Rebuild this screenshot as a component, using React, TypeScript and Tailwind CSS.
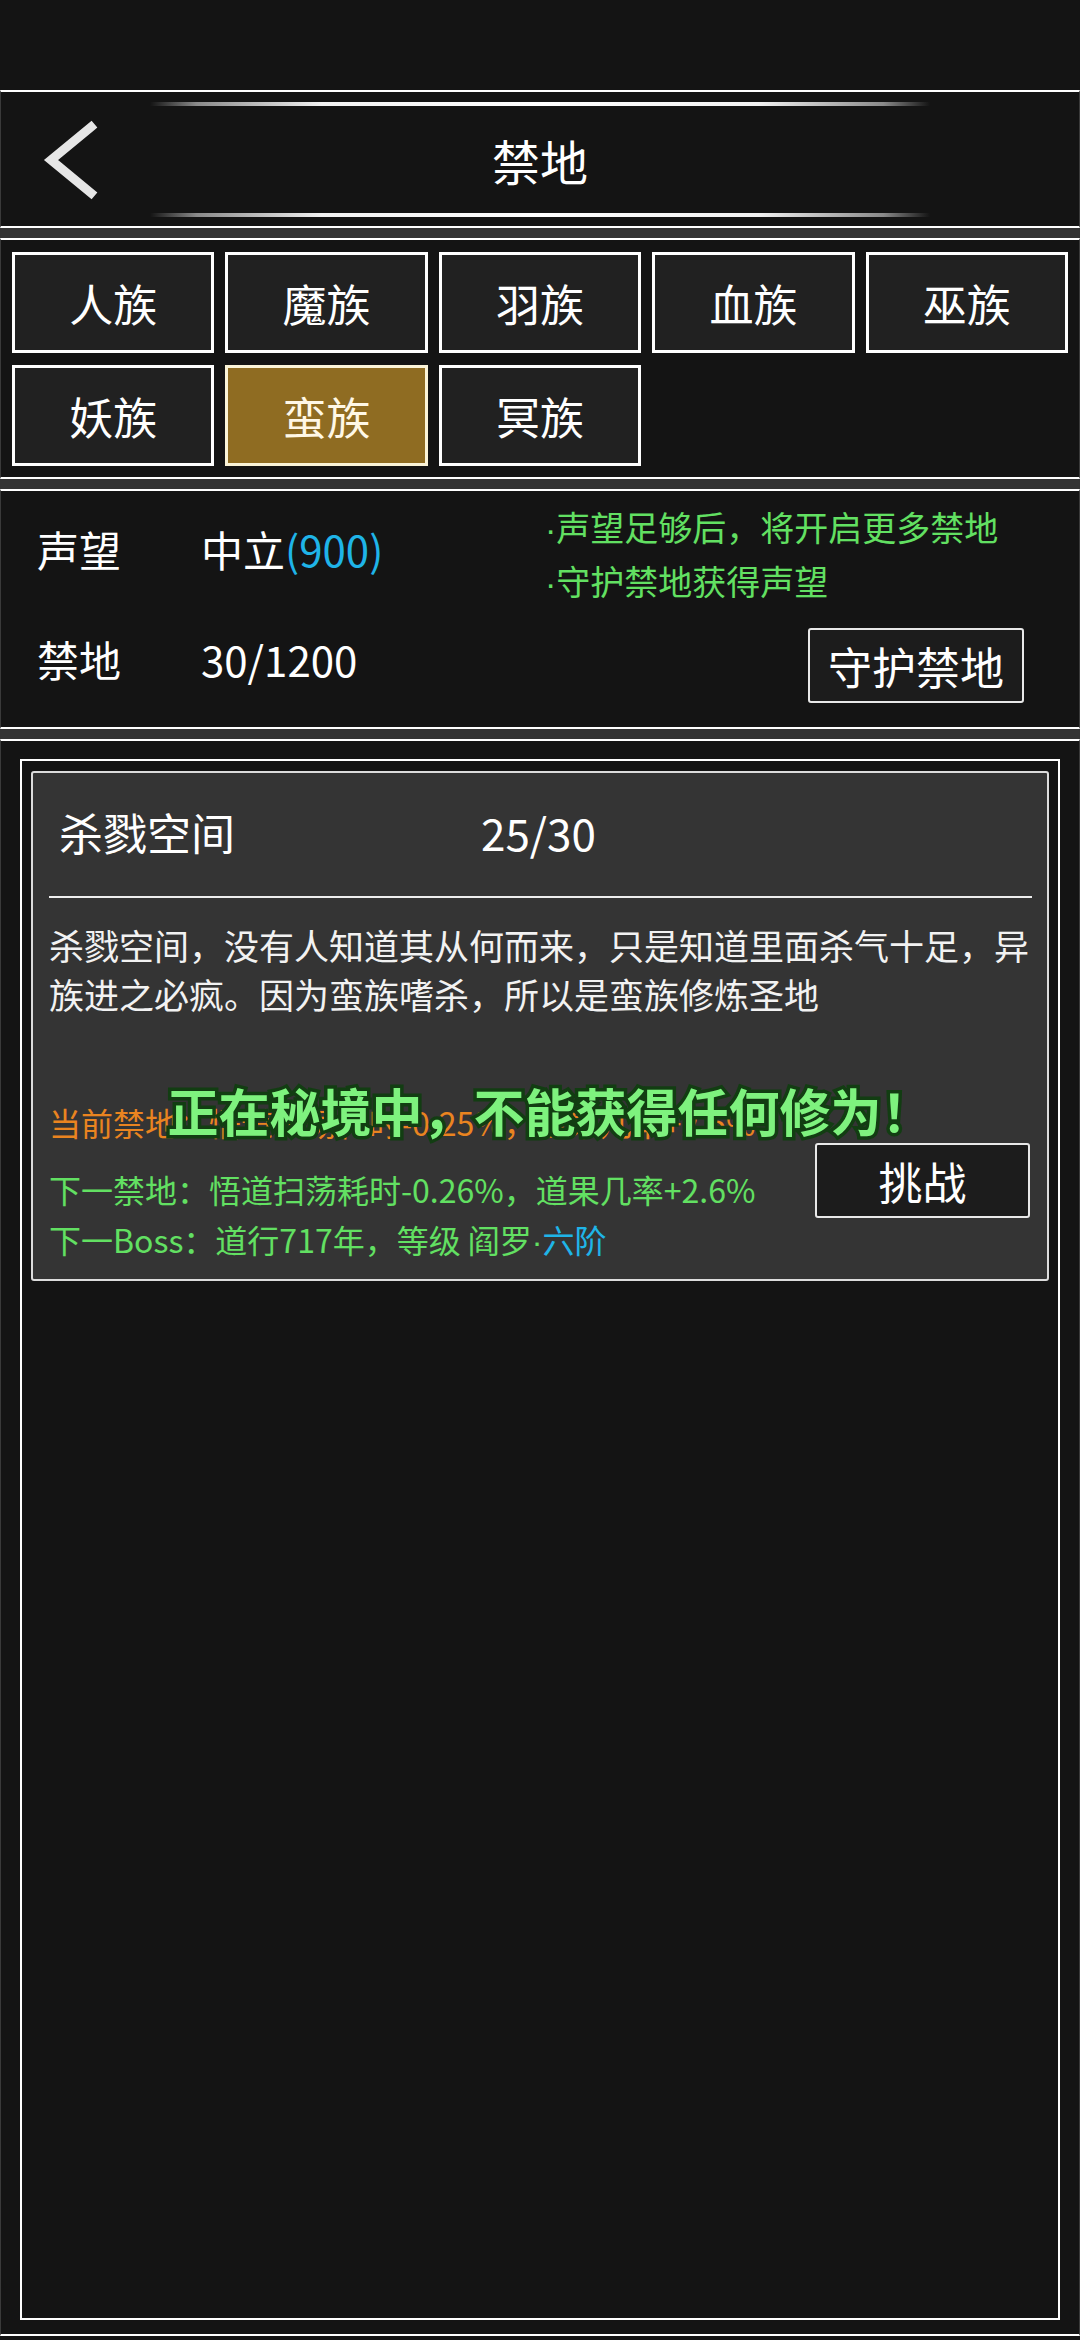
import React from "react";

const races = ["人族", "魔族", "羽族", "血族", "巫族", "妖族", "蛮族", "冥族"];

const Line = () => (
    <div className="mx-auto h-[4px] w-[780px] bg-[linear-gradient(90deg,rgba(120,120,120,0)_0%,#8a8a8a_6%,#f2f2f2_22%,#ffffff_50%,#f2f2f2_78%,#8a8a8a_94%,rgba(120,120,120,0)_100%)]" />
);

const Gap = () => <div className="h-[10px] bg-[#343434]" />;

const Dot = () => <span className="[font-family:'Liberation_Sans',sans-serif]">·</span>;

const App: React.FC = () => {
    return (
        <div className="flex h-[2340px] w-[1080px] flex-col bg-[#141414] text-white [font-family:'Noto_Sans_CJK_SC','Noto_Sans',sans-serif]">
            <div className="h-[90px]" />

            {/* header */}
            <div className="relative flex h-[138px] flex-col border-y-2 border-white border-x border-x-[#3a3a3a]">
                <div className="mt-[10px]">
                    <Line />
                </div>
                <div className="flex flex-1 items-center justify-center text-[48px] leading-none">禁地</div>
                <div className="mb-[9px]">
                    <Line />
                </div>
                <svg className="absolute left-[38px] top-[28px]" width="64" height="80" viewBox="0 0 64 80">
                    <polyline points="52,7 12,40 52,73" fill="none" stroke="#e6e6e6" strokeWidth="9" strokeLinecap="square" strokeLinejoin="miter" />
                </svg>
            </div>

            <Gap />

            {/* race tabs */}
            <div className="h-[241px] border-y-2 border-white border-x border-x-[#3a3a3a] px-[11px] pt-[12px]">
                <div className="grid grid-cols-5 gap-x-[11px] gap-y-[12px]">
                    {races.map((r) => (
                        <div
                            key={r}
                            className={
                                r === "蛮族"
                                    ? "flex h-[101px] items-center justify-center border-[3px] border-[#fbf4d8] bg-[#8f6c22] text-[44px] text-[#fff8e6]"
                                    : "flex h-[101px] items-center justify-center border-[3px] border-white bg-[#212121] text-[44px]"
                            }
                        >
                            {r}
                        </div>
                    ))}
                </div>
            </div>

            <Gap />

            {/* reputation */}
            <div className="flex h-[240px] border-y-2 border-white border-x border-x-[#3a3a3a] pl-[36px] pr-[55px]">
                <div className="flex w-[508px] flex-col pt-[33px] text-[42px] leading-[50px]">
                    <div className="flex">
                        <span className="w-[164px]">声望</span>
                        <span>
                            中立<span className="text-[#1fb4e8]">(900)</span>
                        </span>
                    </div>
                    <div className="mt-[60px] flex">
                        <span className="w-[164px]">禁地</span>
                        <span>30/1200</span>
                    </div>
                </div>
                <div className="flex flex-1 flex-col pt-[10px]">
                    <div className="text-[34px] leading-[51px] text-[#62e062]">
                        <div>
                            <Dot />声望足够后，将开启更多禁地
                        </div>
                        <div>
                            <Dot />守护禁地获得声望
                        </div>
                    </div>
                    <div className="mt-[19px] flex h-[75px] w-[216px] items-center justify-center self-end rounded-[3px] border-2 border-[#e8e8e8] bg-[#1c1c1c] text-[44px]">
                        守护禁地
                    </div>
                </div>
            </div>

            <Gap />

            {/* forbidden land list */}
            <div className="h-[1597px] border-y-2 border-white border-x border-x-[#3a3a3a] px-[19px] pt-[18px]">
                <div className="relative h-[1561px] border-2 border-white px-[9px] pt-[10px]">
                    <div className="h-[510px] rounded-[3px] border-2 border-[#dcdcdc] bg-[#343434]">
                        <div className="flex pl-[26px] pt-[29px] text-[44px] leading-[60px]">
                            <span className="w-[422px]">杀戮空间</span>
                            <span>25/30</span>
                        </div>
                        <div className="ml-[16px] mr-[15px] mt-[34px] h-[2px] bg-[#eeeeee]" />
                        <p className="mt-[22px] pl-[16px] pr-[12px] text-[35px] leading-[49px] text-[#f2f2f2]">
                            杀戮空间，没有人知道其从何而来，只是知道里面杀气十足，异族进之必疯。因为蛮族嗜杀，所以是蛮族修炼圣地
                        </p>
                        <div className="mt-[79px] flex pl-[16px] pr-[17px]">
                            <div className="flex-1 text-[32px] leading-[50px]">
                                <div className="text-[#ea8420]">当前禁地：悟道扫荡耗时-0.25%，道果几率+2.5%</div>
                                <div className="mt-[17px] text-[#62e062]">下一禁地：悟道扫荡耗时-0.26%，道果几率+2.6%</div>
                                <div className="text-[#62e062]">
                                    下一Boss：道行717年，等级 阎罗<Dot />
                                    <span className="text-[#1fb4e8]">六阶</span>
                                </div>
                            </div>
                            <div className="mt-[46px] flex h-[75px] w-[215px] items-center justify-center rounded-[3px] border-2 border-[#e8e8e8] bg-[#1c1c1c] text-[44px]">
                                挑战
                            </div>
                        </div>
                    </div>
                </div>
            </div>

            {/* toast */}
            <div className="pointer-events-none absolute left-0 top-[1077px] flex w-[1080px] justify-center pl-[20px]">
                <span className="text-[51px] font-bold leading-[66px] text-[#7ef27e] [paint-order:stroke_fill] [-webkit-text-stroke:7px_#123d12]">
                    正在秘境中，不能获得任何修为！
                </span>
            </div>
        </div>
    );
};

export default App;
